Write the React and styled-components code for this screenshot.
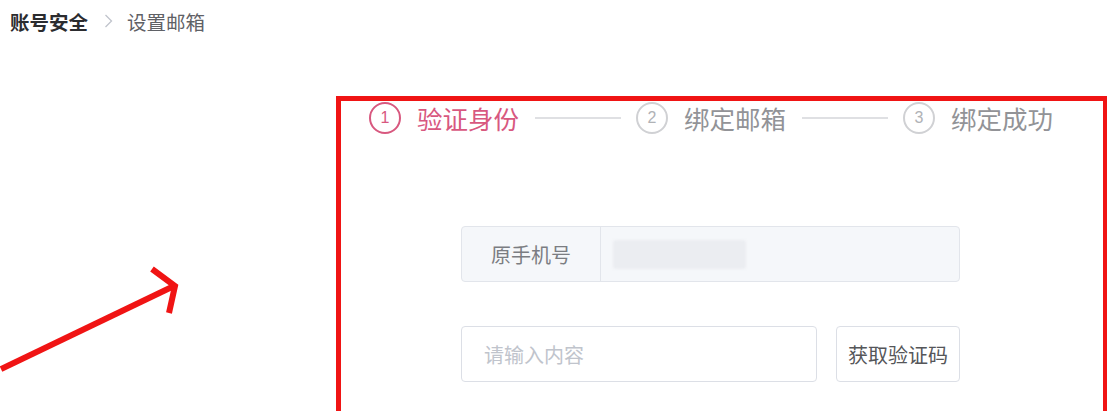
import React from "react";
import styled, { createGlobalStyle } from "styled-components";

const Global = createGlobalStyle`
  html, body { margin: 0; padding: 0; background: #fff; overflow: hidden; }
  body { font-family: "Noto Sans CJK SC", "Noto Sans", sans-serif; }
  * { box-sizing: border-box; }
`;

const Page = styled.div`
  position: relative;
  width: 1107px;
  height: 411px;
  overflow: hidden;
`;

const Breadcrumb = styled.nav`
  display: flex;
  align-items: center;
  height: 42px;
  padding: 0 0 0 10px;
  font-size: 19.5px;
`;

const Crumb = styled.span`
  color: ${(p) => (p.$current ? "#5f6166" : "#2b2c2f")};
  font-weight: ${(p) => (p.$current ? 400 : 700)};
`;

const Sep = styled.span`
  margin: 0 14px 0 16px;
  color: #c0c4cc;
  font-size: 16px;
  display: flex;
  align-items: center;
`;

const Card = styled.section`
  margin: 54px 0 0 336px;
  width: 771px;
  height: 400px;
  border: 5px solid #f01414;
  border-right-width: 4px;
`;

const Steps = styled.div`
  display: flex;
  align-items: center;
  height: 32px;
  margin-top: 1px;
  padding-left: 28px;
`;

const Step = styled.div`
  display: flex;
  align-items: center;
  gap: 16px;
`;

const Circle = styled.div`
  width: 32px;
  height: 32px;
  border-radius: 50%;
  border: 2.5px solid ${(p) => (p.$active ? "#d8587f" : "#d0d1d4")};
  color: ${(p) => (p.$active ? "#d8587f" : "#b0b2b6")};
  font-family: "Liberation Sans", Arial, sans-serif;
  font-size: 16px;
  display: flex;
  align-items: center;
  justify-content: center;
`;

const StepTitle = styled.span`
  font-size: 25.5px;
  line-height: 32px;
  color: ${(p) => (p.$active ? "#d8587f" : "#929397")};
  width: 102px;
  white-space: nowrap;
`;

const Connector = styled.div`
  width: 86px;
  height: 2px;
  background: #dfe0e3;
  margin: 0 15px 0 16px;
`;

const Form = styled.div`
  margin: 92px 0 0 120px;
  display: flex;
  flex-direction: column;
  gap: 44px;
  width: 499px;
`;

const Group = styled.div`
  display: flex;
  height: 56px;
  border: 1px solid #e2e5eb;
  border-radius: 4px;
  background: #f5f7fa;
  overflow: hidden;
`;

const Prepend = styled.div`
  width: 139px;
  display: flex;
  align-items: center;
  justify-content: center;
  border-right: 1px solid #e2e5eb;
  color: #7b7d82;
  font-size: 20px;
`;

const Masked = styled.div`
  display: flex;
  align-items: center;
  padding-left: 12px;
  flex: 1;
`;

const Blur = styled.div`
  width: 133px;
  height: 29px;
  background: #ebedf1;
  border-radius: 3px;
  filter: blur(1px);
`;

const Row = styled.div`
  display: flex;
  gap: 19px;
  height: 56px;
`;

const Input = styled.input`
  flex: 1;
  height: 56px;
  border: 1px solid #dcdfe6;
  border-radius: 4px;
  padding: 0 22px;
  font-size: 20px;
  font-family: "Noto Sans CJK SC", sans-serif;
  color: #606266;
  outline: none;
  &::placeholder { color: #c0c4cc; }
`;

const Button = styled.button`
  width: 124px;
  height: 56px;
  border: 1px solid #dcdfe6;
  border-radius: 4px;
  background: #fff;
  color: #555659;
  font-size: 20px;
  font-family: "Noto Sans CJK SC", sans-serif;
  padding: 0;
`;

const Arrow = styled.svg`
  position: absolute;
  left: 0;
  top: 0;
  pointer-events: none;
`;

export default function App() {
  const steps = ["验证身份", "绑定邮箱", "绑定成功"];
  return (
    <Page>
      <Global />
      <Breadcrumb>
        <Crumb>账号安全</Crumb>
        <Sep>
          <svg width="9" height="14" viewBox="0 0 9 14">
            <path d="M1.5 1 L7.5 7 L1.5 13" fill="none" stroke="#c0c4cc" strokeWidth="1.3" />
          </svg>
        </Sep>
        <Crumb $current>设置邮箱</Crumb>
      </Breadcrumb>
      <Card>
        <Steps>
          {steps.map((s, i) => (
            <React.Fragment key={s}>
              <Step>
                <Circle $active={i === 0}>{i + 1}</Circle>
                <StepTitle $active={i === 0}>{s}</StepTitle>
              </Step>
              {i < steps.length - 1 && <Connector />}
            </React.Fragment>
          ))}
        </Steps>
        <Form>
          <Group>
            <Prepend>原手机号</Prepend>
            <Masked>
              <Blur />
            </Masked>
          </Group>
          <Row>
            <Input placeholder="请输入内容" />
            <Button>获取验证码</Button>
          </Row>
        </Form>
      </Card>
      <Arrow width="200" height="411" viewBox="0 0 200 411">
        <g stroke="#f01414" strokeWidth="6" fill="none" strokeLinecap="butt" strokeLinejoin="miter">
          <line x1="1" y1="369" x2="174" y2="286" />
          <polyline points="152,269 175,286 169,313" />
        </g>
      </Arrow>
    </Page>
  );
}
